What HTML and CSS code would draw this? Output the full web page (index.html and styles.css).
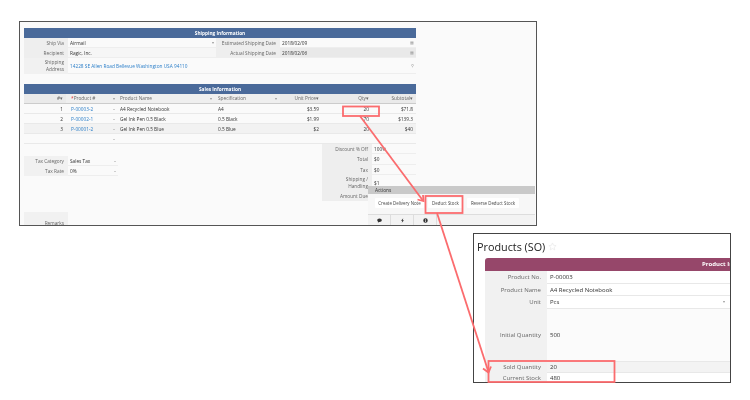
FILE: index.html
```html
<!DOCTYPE html>
<html lang="en">
<head>
<meta charset="utf-8">
<title>Deduct Stock</title>
<link rel="stylesheet" href="styles.css">
</head>
<body>
<section class="window sales-window">
  <div class="band">Shipping Information</div>
  <div class="ship-grid">
    <div class="label">Ship Via</div><div class="value with-mark">Airmail<span class="mark">▾</span></div>
    <div class="label">Estimated Shipping Date</div><div class="value with-mark">2018/02/09<span class="mark">▦</span></div>
    <div class="label">Recipient</div><div class="value tint">Ragic, Inc.</div>
    <div class="label">Actual Shipping Date</div><div class="value tint-dark with-mark">2018/02/06<span class="mark">▦</span></div>
    <div class="label tall">Shipping<br>Address</div><div class="value wide with-mark"><span class="link">14228 SE Allen Road Bellevue Washington USA 94110</span><span class="mark">⚲</span></div>
  </div>
  <div class="band second-band">Sales Information</div>
  <div class="sales-grid heads">
    <div class="head right">#▾</div>
    <div class="head with-mark"><span><i class="req">*</i>Product #</span><span class="mark">▾</span></div>
    <div class="head with-mark">Product Name<span class="mark">▾</span></div>
    <div class="head with-mark">Specification<span class="mark">▾</span></div>
    <div class="head right">Unit Price▾</div>
    <div class="head right">Qty▾</div>
    <div class="head right">Subtotal▾</div>
  </div>
  <div class="sales-grid row">
    <div class="right">1</div><div class="with-mark"><span class="link">P-00003-2</span><span class="mark">–</span></div><div>A4 Recycled Notebook</div><div>A4</div><div class="right">$3.59</div><div class="right">20</div><div class="right">$71.8</div>
  </div>
  <div class="sales-grid row">
    <div class="right">2</div><div class="with-mark"><span class="link">P-00002-1</span><span class="mark">–</span></div><div>Gel Ink Pen 0.5 Black</div><div>0.5 Black</div><div class="right">$1.99</div><div class="right">70</div><div class="right">$139.3</div>
  </div>
  <div class="sales-grid row shaded">
    <div class="right">3</div><div class="with-mark"><span class="link">P-00001-2</span><span class="mark">–</span></div><div>Gel Ink Pen 0.5 Blue</div><div>0.5 Blue</div><div class="right">$2</div><div class="right">20</div><div class="right">$40</div>
  </div>
  <div class="sales-grid row empty">
    <div></div><div class="with-mark"><span></span><span class="mark">–</span></div><div></div><div></div><div></div><div></div><div></div>
  </div>
  <div class="lower">
    <div class="lower-left">
      <div class="tax-grid">
        <div class="label">Tax Category</div><div class="value with-mark">Sales Tax<span class="mark">–</span></div>
        <div class="label">Tax Rate</div><div class="value with-mark">0%<span class="mark">–</span></div>
      </div>
      <div class="remarks"><span>Remarks</span></div>
    </div>
    <div class="totals">
      <div class="label">Discount % Off</div><div class="value">100%</div>
      <div class="label">Total</div><div class="value">$0</div>
      <div class="label">Tax</div><div class="value">$0</div>
      <div class="label ship-cost">Shipping /<br>Handling</div><div class="value ship-cost">$1</div>
      <div class="label">Amount Due</div><div class="value"></div>
    </div>
  </div>
  <div class="actions">
    <div class="actions-title">Actions</div>
    <div class="actions-buttons">
      <span class="btn btn-create">Create Delivery Note</span>
      <span class="btn btn-deduct">Deduct Stock</span>
      <span class="btn btn-reverse">Reverse Deduct Stock</span>
    </div>
    <div class="actions-tabs">
      <span class="tab"><svg viewBox="0 0 10 10" class="tab-icon"><path d="M5 1C2.2 1 .5 2.6.5 4.6c0 1.2.6 2.2 1.7 2.9L1.7 9.300 4 8.100h1c2.800 0 4.500-1.500 4.500-3.500S7.800 1 5 1z"/></svg></span>
      <span class="tab"><svg viewBox="0 0 10 10" class="tab-icon"><path d="M6.500.5 2 5.600h2.500L3.500 9.500 8 4.400H5.500z"/></svg></span>
      <span class="tab"><svg viewBox="0 0 10 10" class="tab-icon"><path fill-rule="evenodd" d="M5 .5a4.500 4.500 0 1 0 0 9 4.500 4.500 0 0 0 0-9zM4.300 2.200h1.400v1.300H4.300zM4.300 4.400h1.400v3.400H4.300z"/></svg></span>
    </div>
  </div>
</section>

<section class="window product-window">
  <h1 class="product-title">Products (SO) <svg class="star" viewBox="0 0 20 20"><path d="M10 2l2.400 5.300 5.600.6-4.200 3.900 1.200 5.700-5-2.900-5 2.900 1.200-5.700L2 7.900l5.600-.6z"/></svg></h1>
  <div class="product-card">
    <div class="product-band"><span>Product Information</span></div>
    <div class="product-grid">
      <div class="p-label">Product No.</div><div class="p-value">P-00003</div>
      <div class="p-label">Product Name</div><div class="p-value">A4 Recycled Notebook</div>
      <div class="p-label">Unit</div><div class="p-value with-mark">Pcs<span class="mark">▾</span></div>
      <div class="p-label big">Initial Quantity</div><div class="p-value big">500</div>
      <div class="p-label sold">Sold Quantity</div><div class="p-value sold sold-value">20</div>
      <div class="p-label stock">Current Stock</div><div class="p-value stock">480</div>
    </div>
  </div>
</section>

<svg class="callouts" viewBox="0 0 750 400" aria-hidden="true">
  <g class="callout-line">
    <rect x="343" y="106.500" width="36" height="9.500"/>
    <rect x="425.500" y="196" width="37" height="17"/>
    <rect x="488.500" y="361" width="126" height="21"/>
    <path d="M360 116 422.500 200"/>
    <path d="M417.500 199.500 423.500 201 423 195"/>
    <path d="M437 213 488.500 372"/>
    <path d="M483 368.500 488.500 372.500 491 366.500"/>
  </g>
</svg>
</body>
</html>
```
FILE: styles.css
```css
* { box-sizing: border-box; }
html, body { margin: 0; padding: 0; }
body {
  width: 750px;
  height: 400px;
  position: relative;
  overflow: hidden;
  background: #fff;
  font-family: "Open Sans", "Noto Sans", sans-serif;
  font-size: 4.750px;
  color: #444;
}
.window {
  position: absolute;
  overflow: hidden;
  background: #fafafa;
  filter: blur(0.3px);
}
.sales-window {
  left: 19px;
  top: 21px;
  width: 518px;
  height: 204.500px;
  border: 1.200px solid #555;
  padding: 6px 0 0 4px;
}
.band {
  width: 392px;
  height: 10px;
  background: #4a6a9a;
  color: #fff;
  font-weight: 700;
  line-height: 10px;
  text-align: center;
}
.second-band { margin-top: 10px; }
.ship-grid {
  display: grid;
  width: 392px;
  grid-template-columns: 44px 148px 64px 136px;
  grid-template-rows: 10px 10px 16px;
}
.label {
  background: #eeeeee;
  color: #666;
  text-align: right;
  padding-right: 4px;
  line-height: 10px;
  white-space: nowrap;
}
.value {
  padding: 0 2px;
  line-height: 10px;
  color: #333;
  border-bottom: 0.5px solid #eee;
}
.with-mark { display: flex; justify-content: space-between; }
.mark { color: #999; font-size: 4px; }
.tint { background: #f6f6f6; }
.tint-dark { background: #e9e9e9; }
.tall {
  height: 16px;
  line-height: 7px;
  padding-top: 1px;
  background: #f1f1f1;
}
.wide { grid-column: span 3; height: 16px; line-height: 16px; padding-right: 2px; }
.link { color: #2c7fc9; }
.sales-grid {
  display: grid;
  width: 392px;
  grid-template-columns: 42px 51px 98px 65px 42px 50px 44px;
  line-height: 10px;
  color: #333;
}
.sales-grid > div { padding: 0 3px; }
.sales-grid > div:nth-child(2) { padding-left: 5px; padding-right: 2px; }
.heads { height: 10px; background: #efefef; border-bottom: 1px solid #ccc; line-height: 9px; color: #666; }
.head.right { background: #eaeaea; }
.req { color: #d33; font-style: normal; }
.right { text-align: right; }
.row { height: 10px; border-bottom: 0.5px solid #e9e9e9; }
.shaded { background: #f2f2f2; }
.lower { display: flex; justify-content: space-between; width: 392px; }
.lower-left { display: flex; flex-direction: column; width: 94px; }
.tax-grid {
  display: grid;
  margin-top: 12px;
  grid-template-columns: 44px 50px;
  grid-auto-rows: 10px;
}
.tax-grid .label { background: #f1f1f1; }
.remarks {
  width: 44px;
  height: 30px;
  margin-top: 36px;
  background: #f1f1f1;
  color: #666;
  text-align: right;
  padding: 8px 4px 0 0;
}
.totals {
  display: grid;
  width: 94px;
  grid-template-columns: 50px 44px;
  grid-template-rows: 10px 11px 10px 16px 10px;
}
.ship-cost { line-height: 7px; padding-top: 1px; }
.value.ship-cost { padding-top: 5px; }
.actions {
  position: absolute;
  left: 348px;
  top: 164px;
  width: 167px;
  height: 40px;
  background: #f7f7f7;
}
.actions-title {
  height: 8px;
  padding-left: 7px;
  line-height: 8px;
  background: #c9c9c9;
  color: #333;
}
.actions-buttons {
  display: flex;
  gap: 4px;
  padding: 4px 0 0 7px;
  height: 20px;
  font-size: 4.400px;
}
.btn {
  height: 10px;
  line-height: 10px;
  text-align: center;
  background: #fff;
  color: #444;
  border-radius: 1px;
  white-space: nowrap;
}
.btn-create { width: 49px; }
.btn-deduct { width: 35px; }
.btn-reverse { width: 52px; }
.actions-tabs {
  display: flex;
  height: 12px;
  background: #f3f3f3;
  border-top: 0.5px solid #ddd;
}
.tab {
  width: 23px;
  height: 100%;
  display: flex;
  align-items: center;
  justify-content: center;
  border-right: 0.5px solid #ddd;
}
.tab-icon { width: 5px; height: 5px; fill: #333; }
.product-window {
  left: 473px;
  top: 232.500px;
  width: 257.500px;
  height: 150.500px;
  border: 1.200px solid #444;
  background: #fff;
}
.product-title {
  margin: 0;
  height: 24px;
  padding: 2px 0 0 3px;
  font-size: 10.800px;
  line-height: 19px;
  font-weight: 400;
  color: #222;
  display: flex;
  align-items: center;
  gap: 3px;
}
.star { width: 9px; height: 9px; fill: none; stroke: #e8e8e8; stroke-width: 1.500; }
.product-card { margin-left: 11px; width: 300px; }
.product-band {
  height: 13px;
  width: 300px;
  background: #96476a;
  color: #fff;
  font-size: 6px;
  font-weight: 700;
  line-height: 13px;
  border-radius: 3px 3px 0 0;
  padding-left: 217px;
  white-space: nowrap;
}
.product-grid {
  display: grid;
  width: 245px;
  grid-template-columns: 62px 183px;
  grid-template-rows: 13px 12px 13px 53px 11px 11px;
  font-size: 6px;
}
.p-label {
  background: #f1f1f1;
  color: #666;
  text-align: right;
  padding-right: 6px;
  line-height: 12px;
}
.p-value {
  padding-left: 3px;
  padding-right: 5px;
  line-height: 12px;
  color: #333;
  border-bottom: 0.5px solid #e8e8e8;
}
.big { line-height: 53px; }
.p-value.big { background: #fbfbfb; }
.sold { line-height: 11px; }
.sold-value { background: #f3f3f3; }
.stock { line-height: 11px; }
.callouts {
  position: absolute;
  left: 0;
  top: 0;
  width: 750px;
  height: 400px;
  pointer-events: none;
}
.callout-line { fill: none; stroke: #fb6c6e; stroke-width: 1.800; }
```
